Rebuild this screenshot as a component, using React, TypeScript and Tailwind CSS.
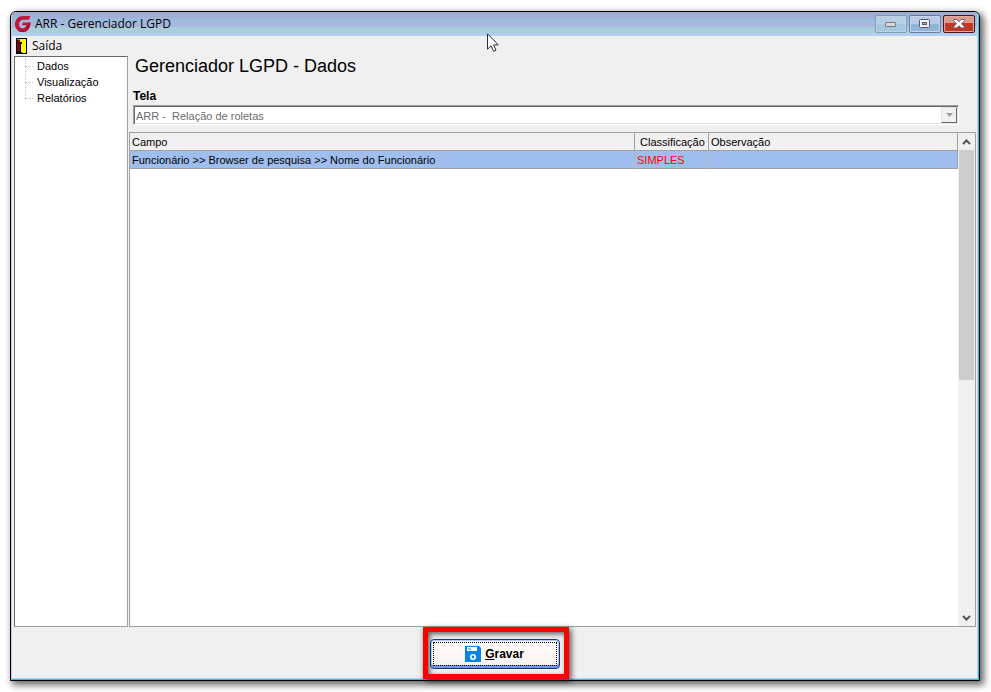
import React from "react";

const menuItems = ["Dados", "Visualização", "Relatórios"];

const rows = [
  {
    campo: "Funcionário >> Browser de pesquisa >> Nome do Funcionário",
    classificacao: "SIMPLES",
    observacao: "",
  },
];

function Logo() {
  return (
    <svg width="16" height="16" viewBox="0 0 16 16">
      <path
        d="M15.500 0H8.500C3.500 0 0 3.400 0 8.200 0 12.800 3 16 7.400 16c4.800 0 7.800-3.200 8.100-9.500H8L6.800 9.300h4.400c-.6 2-1.800 3-3.600 3-2.200 0-3.500-1.600-3.500-4 0-2.700 1.600-4.500 4.300-4.500h5.500z"
        fill="#c0183e"
      />
      <path d="M15.500 6.500c-.3 6.300-3.300 9.500-8.100 9.500-1.800 0-3.400-.6-4.700-1.600 5 1 9.300-.9 11-7.900z" fill="#a01438" />
    </svg>
  );
}

function DoorIcon() {
  return (
    <svg width="11" height="16" viewBox="0 0 11 16" shapeRendering="crispEdges">
      <rect width="11" height="16" fill="#000" />
      <rect x="1" y="2" width="3" height="11" fill="#800000" />
      <rect x="1" y="1" width="3" height="1" fill="#00c8d8" />
      <path d="M4 1h6v14H6v-1H5V6h1V4H4z" fill="#ff0" />
      <rect x="3" y="5" width="2" height="1" fill="#000" />
    </svg>
  );
}

function SaveIcon() {
  return (
    <svg width="16" height="16" viewBox="0 0 16 16">
      <path d="M0 0h14l2 2v14H0z" fill="#0a84e4" />
      <path d="M2 1h10v4H2z" fill="#fff" />
      <path d="M3 2h3v2H3z" fill="#8cc8f5" />
      <circle cx="8" cy="11" r="2.200" fill="none" stroke="#fff" strokeWidth="1.600" />
    </svg>
  );
}

function TitleButtons() {
  return (
    <div className="flex gap-0.5">
      <button
        type="button"
        aria-label="Minimizar"
        className="flex h-[18px] w-8 items-center justify-center rounded-xs border border-[#7c9fc0] bg-linear-to-b from-[#b9cde4] from-50% to-[#a5c8de] to-50% shadow-[inset_0_0_0_1px_#b8d2e6]"
      >
        <svg width="12" height="6" viewBox="0 0 12 6">
          <rect x="0.500" y="1.500" width="10" height="4" rx="0.500" fill="#d8d8d8" stroke="#777" />
        </svg>
      </button>
      <button
        type="button"
        aria-label="Maximizar"
        className="flex h-[18px] w-8 items-center justify-center rounded-xs border border-[#647ea5] bg-linear-to-b from-[#b9c9e8] from-50% to-[#93b4d8] to-50% shadow-[inset_0_0_0_1px_#c5d8ee]"
      >
        <svg width="12" height="10" viewBox="0 0 12 10">
          <rect x="0.500" y="0.500" width="10" height="8" rx="1" fill="#f4f4f4" stroke="#53566c" />
          <rect x="3.500" y="3.500" width="4" height="2" fill="#a0b4d8" stroke="#53566c" />
        </svg>
      </button>
      <button
        type="button"
        aria-label="Fechar"
        className="flex h-[18px] w-8 items-center justify-center rounded-xs border border-[#4d1420] bg-linear-to-b from-[#dc9a8e] from-45% to-[#bf3a24] to-45% shadow-[inset_0_0_0_1px_#e0a79d]"
      >
        <svg width="12" height="10" viewBox="0 0 12 10">
          <path d="M.5.500h3.300L6 2.700 8.200.5h3.300v1L8.600 4.700l2.900 3.200v1H8.200L6 6.700 3.800 8.900H.5v-1l2.900-3.200L.5 1.500z" fill="#fff" stroke="#53475a" strokeWidth="0.800" />
        </svg>
      </button>
    </div>
  );
}

function TitleBar() {
  return (
    <header className="flex h-6 shrink-0 items-center rounded-t-sm bg-[linear-gradient(to_bottom,#a0acd0_0_4px,#9cbadb_7px_9px,#a8b8dc_11px_14px,#aacddc_16px_20px,#b2cef0_22px)] pr-0.5 pl-[3px]">
      <Logo />
      <h1 className="ml-1 flex-1 font-['Open_Sans',sans-serif] text-[12px] leading-4">
        ARR - Gerenciador LGPD
      </h1>
      <TitleButtons />
    </header>
  );
}

function Sidebar() {
  return (
    <nav className="w-[114px] shrink-0 border border-[#a0a0a0] border-t-[#696969] border-l-[#696969] bg-white pt-px pl-2.5">
      <ul className="relative">
        <li aria-hidden="true" className="absolute top-0 left-0 h-10 border-l border-dotted border-[#c0c0c0]" />
        {menuItems.map((item) => (
          <li key={item} className="flex h-4 items-center gap-1">
            <span className="w-2 border-t border-dotted border-[#c0c0c0]" />
            <a href="#" className="leading-4">
              {item}
            </a>
          </li>
        ))}
      </ul>
    </nav>
  );
}

function ScrollBar() {
  return (
    <div className="flex w-[17px] shrink-0 flex-col bg-[#f0f0f0]">
      <button type="button" aria-label="Rolar para cima" className="flex h-[17px] items-center justify-center">
        <svg width="9" height="6" viewBox="0 0 9 6">
          <path d="M1 5l3.500-3.500L8 5" fill="none" stroke="#555" strokeWidth="2" />
        </svg>
      </button>
      <div className="flex-1">
        <div className="mx-px h-1/2 bg-[#cdcdcd]" />
      </div>
      <button type="button" aria-label="Rolar para baixo" className="flex h-[17px] items-center justify-center">
        <svg width="9" height="6" viewBox="0 0 9 6">
          <path d="M1 1l3.500 3.500L8 1" fill="none" stroke="#555" strokeWidth="2" />
        </svg>
      </button>
    </div>
  );
}

function Grid() {
  return (
    <div className="flex flex-1 border border-[#a0a0a0] bg-white">
      <div className="flex-1">
        <table className="w-full table-fixed border-separate border-spacing-0 text-left">
          <thead>
            <tr className="h-[18px] bg-[#f0f0f0]">
              <th className="border-r border-b border-[#a0a0a0] p-0 pl-0.5 font-normal">Campo</th>
              <th className="w-[74px] border-r border-b border-[#a0a0a0] p-0 pl-[5px] font-normal">Classificação</th>
              <th className="w-[249px] border-r border-b border-[#a0a0a0] p-0 pl-0.5 font-normal">Observação</th>
            </tr>
          </thead>
          <tbody>
            {rows.map((row) => (
              <tr key={row.campo} className="h-[18px] bg-[#9fbeee]">
                <td className="border-r border-b border-[#a0a0a0] border-r-[#b8b8b8] p-0 pl-0.5">{row.campo}</td>
                <td className="border-r border-b border-[#a0a0a0] border-r-[#b8b8b8] p-0 pl-0.5 text-[#ff0000]">{row.classificacao}</td>
                <td className="border-r border-b border-[#a0a0a0] p-0 pl-0.5">{row.observacao}</td>
              </tr>
            ))}
          </tbody>
        </table>
      </div>
      <ScrollBar />
    </div>
  );
}

function ScreenSelect() {
  return (
    <div className="mr-[17px] ml-1">
      <label htmlFor="tela" className="block text-[12px] leading-4 font-bold">
        Tela
      </label>
      <div className="relative mt-px h-5 border border-[#a0a0a0] border-r-white border-b-white bg-white shadow-[inset_1px_1px_0_#696969,inset_-1px_-1px_0_#e3e3e3]">
        <select id="tela" disabled className="block h-full w-full appearance-none pt-px pl-0.5 text-[#6d6d6d] opacity-100">
          <option>ARR -&nbsp; Relação de roletas</option>
        </select>
        <span className="pointer-events-none absolute inset-y-px right-px flex w-4 items-center justify-center border border-[#e3e3e3] border-r-[#696969] border-b-[#696969] bg-[#f0f0f0]">
          <svg width="7" height="4" viewBox="0 0 7 4">
            <path d="M0 0h7L3.500 4z" fill="#a0a0a0" />
          </svg>
        </span>
      </div>
    </div>
  );
}

function Cursor() {
  return (
    <svg className="pointer-events-none absolute top-[33px] left-[487px]" width="12" height="20" viewBox="0 0 12 20">
      <path d="M.5.800v15.400l3.600-3.400 2.500 5.500 2.400-1.100-2.400-5.300h4.700z" fill="#fff" stroke="#2c2c3c" />
    </svg>
  );
}

export default function App() {
  return (
    <div className="relative flex min-h-screen flex-col overflow-hidden bg-white pt-[11px] pr-[11px] pb-[11px] pl-2.5 font-['Liberation_Sans',Arial,sans-serif] text-[11px] leading-4 text-black">
      <div className="flex flex-1 flex-col rounded-t-md border border-black bg-[#f0f0f0] shadow-[3px_3px_7px_1px_rgba(0,0,0,0.6)]">
        <div className="flex flex-1 flex-col rounded-t-md border-r border-b border-[#2cc4dc]">
          <div className="flex flex-1 flex-col rounded-t-md border-x border-b border-[#b9cdee]">
            <TitleBar />

            <div className="flex h-5 shrink-0 items-center gap-[5px] pl-1">
              <DoorIcon />
              <button type="button" className="font-['Open_Sans',sans-serif] text-[12px]">
                Saída
              </button>
            </div>

            <div className="flex flex-1 gap-px pr-px pl-0.5">
              <Sidebar />
              <main className="flex flex-1 flex-col">
                <h2 className="ml-1.5 h-8 text-[18px] leading-5">Gerenciador LGPD - Dados</h2>
                <ScreenSelect />
                <div className="mt-[7px] flex flex-1">
                  <Grid />
                </div>
              </main>
            </div>

            <footer className="flex h-[51px] shrink-0 items-start justify-center pl-0.5">
              <div className="-mb-1 border-5 border-[#ff0000] pt-[7px] pr-1 pb-[5px] pl-0.5 shadow-[2px_2px_6px_rgba(0,0,0,0.7),inset_2px_2px_5px_rgba(0,0,0,0.6)]">
                <button
                  type="button"
                  className="flex h-[30px] w-[130px] rounded-sm border border-[#0d3b73] bg-linear-to-b from-white via-[#fff8f4] to-[#f0f0f0] p-0.5 text-[12px] font-bold shadow-[inset_0_-3px_0_#7a95ee,inset_0_0_0_1px_#b4c8f6]"
                >
                  <span className="flex h-full flex-1 items-center justify-center gap-1 border border-dotted border-black">
                    <SaveIcon />
                    <span>
                      <u>G</u>ravar
                    </span>
                  </span>
                </button>
              </div>
            </footer>
          </div>
        </div>
      </div>
      <Cursor />
    </div>
  );
}
